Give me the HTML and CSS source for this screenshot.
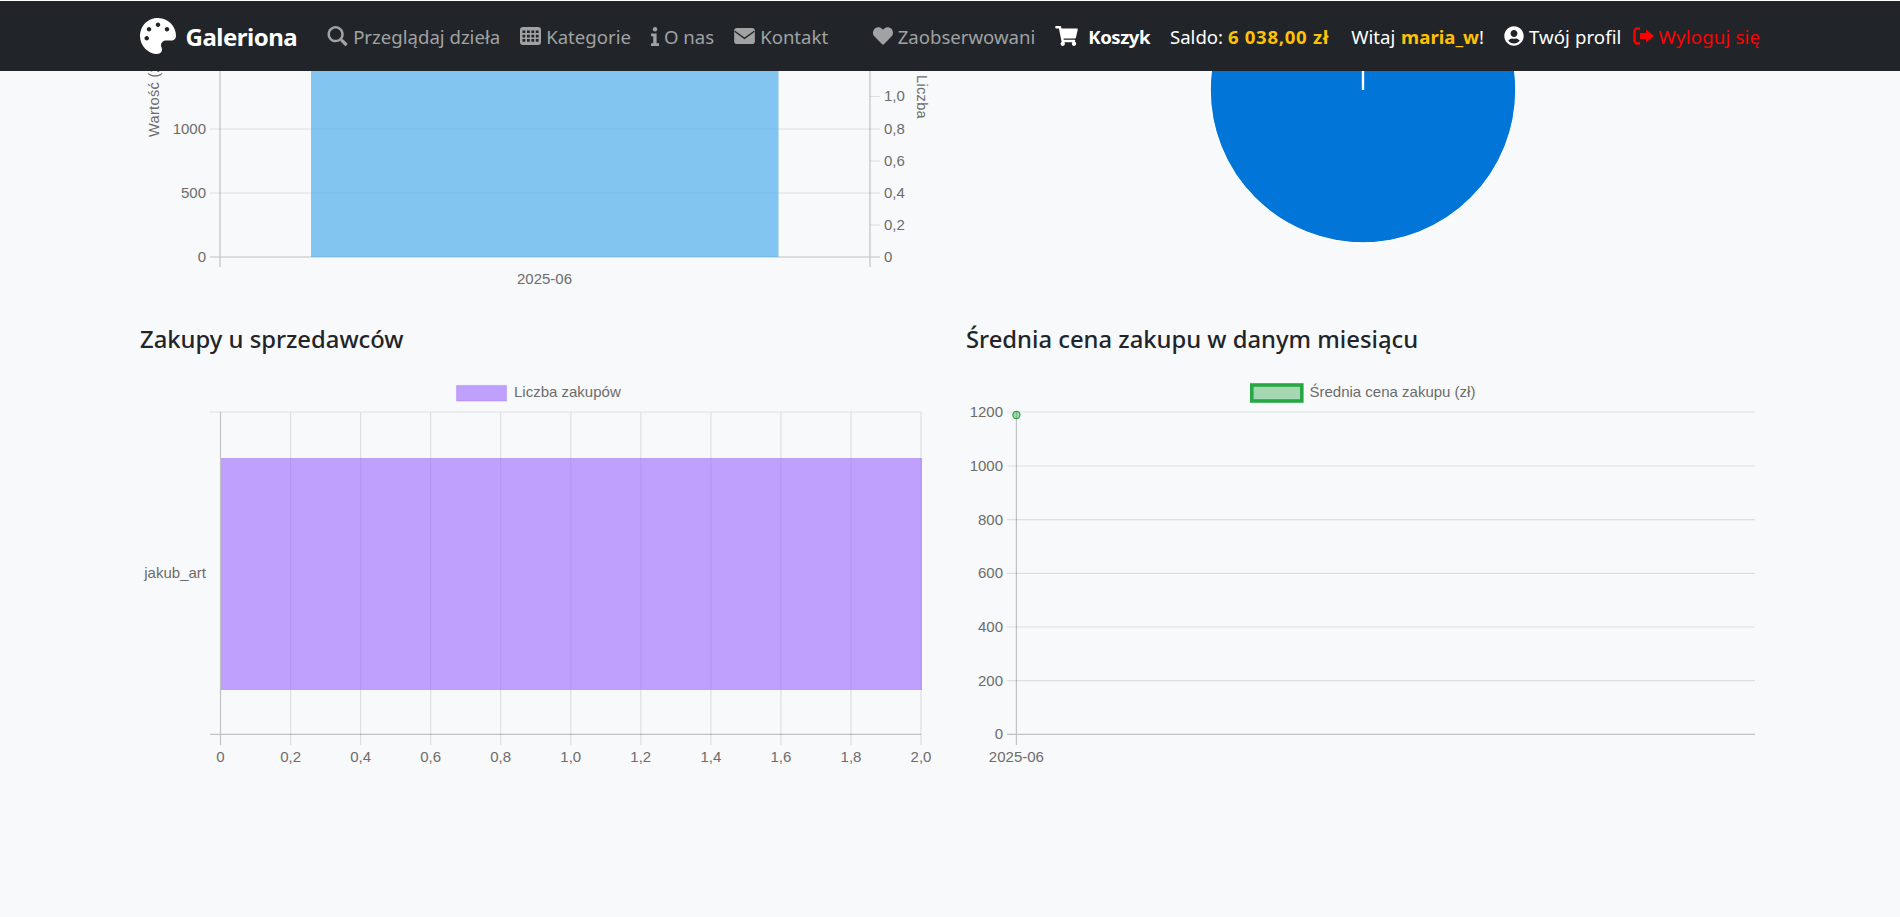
FILE: index.html
```html
<!DOCTYPE html>
<html lang="pl">
<head>
    <meta charset="UTF-8">
    <meta name="viewport" content="width=device-width, initial-scale=1.0">
    <title>Galeriona - Statystyki</title>
    <link rel="stylesheet" href="styles.css">
</head>
<body>

    <nav class="navbar">
        <a class="brand" href="#">
            <svg class="logo" viewBox="0 0 512 512"><path d="M204.3 5C104.9 24.4 24.8 104.3 5.2 203.4c-37 187 131.7 326.4 258.8 306.7 41.2-6.4 61.4-54.6 42.5-91.7-23.1-45.4 9.9-98.4 60.9-98.4h79.7c35.8 0 64.8-29.6 64.9-65.3C511.5 97.1 368.1-26.9 204.3 5zM96 320c-17.7 0-32-14.3-32-32s14.3-32 32-32 32 14.3 32 32-14.3 32-32 32zm32-128c-17.7 0-32-14.3-32-32s14.3-32 32-32 32 14.3 32 32-14.3 32-32 32zm128-64c-17.7 0-32-14.3-32-32s14.3-32 32-32 32 14.3 32 32-14.3 32-32 32zm128 64c-17.7 0-32-14.3-32-32s14.3-32 32-32 32 14.3 32 32-14.3 32-32 32z"/></svg>
            <span>Galeriona</span>
        </a>

        <div class="nav-group nav-main">
            <a class="nav-link" href="#">
                <svg class="icon icon-search" viewBox="0 0 512 512"><path d="M505 442.7L405.3 343c-4.5-4.5-10.6-7-17-7H372c27.6-35.3 44-79.7 44-128C416 93.1 322.9 0 208 0S0 93.1 0 208s93.1 208 208 208c48.3 0 92.7-16.4 128-44v16.3c0 6.4 2.5 12.5 7 17l99.7 99.7c9.4 9.4 24.6 9.4 33.9 0l28.3-28.3c9.4-9.4 9.4-24.6.1-34zM208 352c-79.5 0-144-64.4-144-144 0-79.500 64.400-144 144-144 79.500 0 144 64.500 144 144 0 79.600-64.500 144-144 144z"/></svg>
                Przeglądaj dzieła
            </a>
            <a class="nav-link" href="#">
                <svg class="icon icon-table" viewBox="0 0 21 18"><path fill-rule="evenodd" d="M3 0h15a3 3 0 0 1 3 3v12a3 3 0 0 1-3 3H3a3 3 0 0 1-3-3V3a3 3 0 0 1 3-3zM2.500 3.500v2.600h2.800V3.500zm4.500 0v2.600h2.800V3.500zm4.400 0v2.600h2.800V3.500zm4.400 0v2.600h2.800V3.500zM2.500 7.800v2.600h2.800V7.800zm4.500 0v2.600h2.800V7.800zm4.400 0v2.600h2.800V7.800zm4.400 0v2.600h2.800V7.800zM2.500 12.100v2.600h2.800v-2.600zm4.500 0v2.600h2.800v-2.600zm4.400 0v2.600h2.800v-2.600zm4.400 0v2.600h2.800v-2.600z"/></svg>
                Kategorie
            </a>
            <a class="nav-link" href="#">
                <svg class="icon icon-info" viewBox="0 0 8 19"><circle cx="4" cy="2.200" r="2.200"/><path d="M0 6.500h5.600v9.800H8V19H0v-2.700h2.200V9.200H0z"/></svg>
                O nas
            </a>
            <a class="nav-link" href="#">
                <svg class="icon icon-mail" viewBox="0 0 22 17"><rect width="22" height="17" rx="3"/><path class="mail-fold" d="M0.500 3.500L11 11l10.500-7.500"/></svg>
                Kontakt
            </a>
        </div>

        <div class="nav-group nav-user">
            <a class="nav-link nav-watched" href="#">
                <svg class="icon icon-heart" viewBox="0 0 512 512"><path d="M462.3 62.6C407.500 15.900 326 24.300 275.700 76.200L256 96.500l-19.700-20.300C186.100 24.300 104.500 15.900 49.700 62.600c-62.800 53.600-66.100 149.800-9.900 207.900l193.500 199.800c12.500 12.900 32.800 12.900 45.300 0l193.500-199.800c56.300-58.100 53-154.300-9.800-207.900z"/></svg>
                Zaobserwowani
            </a>
            <a class="nav-link nav-cart" href="#">
                <svg class="icon icon-cart" viewBox="0 0 576 512"><path d="M528.120 301.319l47.273-208C578.806 78.301 567.391 64 551.990 64H159.208l-9.166-44.810C147.758 8.021 137.930 0 126.529 0H24C10.745 0 0 10.745 0 24v16c0 13.255 10.745 24 24 24h69.883l70.248 343.435C147.325 417.100 136 435.222 136 456c0 30.928 25.072 56 56 56s56-25.072 56-56c0-15.674-6.447-29.835-16.824-40h209.647C430.447 426.165 424 440.326 424 456c0 30.928 25.072 56 56 56s56-25.072 56-56c0-22.172-12.888-41.332-31.579-50.405l5.517-24.276c3.413-15.018-8.002-29.319-23.403-29.319H218.117l-6.545-32h293.145c11.206 0 20.920-7.754 23.403-18.681z"/></svg>
                <strong class="cart-label">Koszyk</strong>
            </a>
            <span class="nav-text">Saldo: <strong class="accent balance">6 038,00 zł</strong></span>
            <span class="nav-text greeting">Witaj <strong class="accent">maria_w</strong>!</span>
            <a class="nav-link nav-profile" href="#">
                <svg class="icon icon-profile" viewBox="0 0 496 512"><path d="M248 8C111 8 0 119 0 256s111 248 248 248 248-111 248-248S385 8 248 8zm0 96c48.600 0 88 39.400 88 88s-39.400 88-88 88-88-39.400-88-88 39.400-88 88-88zm0 344c-58.700 0-111.300-26.600-146.500-68.200 18.800-35.400 55.600-59.800 98.500-59.800 2.400 0 4.800.4 7.100 1.100 13 4.200 26.600 6.900 40.900 6.900 14.300 0 28-2.700 40.900-6.900 2.300-.7 4.700-1.100 7.100-1.100 42.900 0 79.700 24.400 98.500 59.800C359.300 421.400 306.700 448 248 448z"/></svg>
                Twój profil
            </a>
            <a class="nav-link nav-logout" href="#">
                <svg class="icon icon-logout" viewBox="0 0 21 18"><path class="logout-door" d="M7 1.500H4.500a3 3 0 0 0-3 3v9a3 3 0 0 0 3 3H7"/><path d="M7 6h6V2.500L21 9l-8 6.500V12H7z"/></svg>
                Wyloguj się
            </a>
        </div>
    </nav>

    <main class="content">
        <section class="chart-row">
            <!-- value / count per month, scrolled under the navbar -->
            <svg class="chart chart-top" viewBox="140 71 826 229">
                <path class="grid" d="M210 65H880M210 129H880M210 193H880M870 96.500H880M870 161H880M870 225H880"/>
                <path class="axis" d="M220 60V267M870 60V267M210 257H880"/>
                <rect class="bar-blue" x="311" y="60" width="467.500" height="197"/>
                <text class="tick" x="206" y="134" text-anchor="end">1000</text>
                <text class="tick" x="206" y="198" text-anchor="end">500</text>
                <text class="tick" x="206" y="262" text-anchor="end">0</text>
                <text class="tick" x="884" y="69">1,2</text>
                <text class="tick" x="884" y="101">1,0</text>
                <text class="tick" x="884" y="134">0,8</text>
                <text class="tick" x="884" y="166">0,6</text>
                <text class="tick" x="884" y="198">0,4</text>
                <text class="tick" x="884" y="230">0,2</text>
                <text class="tick" x="884" y="262">0</text>
                <text class="tick" x="544.500" y="284" text-anchor="middle">2025-06</text>
                <text class="tick tick-side" transform="translate(159,137) rotate(-90)">Wartość (zł)</text>
                <text class="tick tick-side" transform="translate(917,75) rotate(90)">Liczba</text>
            </svg>
            <svg class="chart chart-top" viewBox="966 71 794 229">
                <circle class="pie" cx="1363" cy="90" r="152.800"/>
                <path class="pie-gap" d="M1363 60V90"/>
            </svg>
        </section>

        <section class="chart-row">
            <div class="chart-box">
                <h5>Zakupy u sprzedawców</h5>
                <svg class="chart chart-bottom" viewBox="140 370 826 430">
                    <rect class="legend-purple" x="456.500" y="385.500" width="50" height="15.500"/>
                    <text class="tick" x="514" y="397">Liczba zakupów</text>
                    <path class="grid" d="M290.600 412V745M360.600 412V745M430.700 412V745M500.700 412V745M570.800 412V745M640.800 412V745M710.900 412V745M780.900 412V745M851 412V745M921 412V745M210 412H921"/>
                    <path class="axis" d="M220.500 412V745M210 734.300H921"/>
                    <rect class="bar-purple" x="221" y="458" width="701" height="232"/>
                    <text class="tick" x="206" y="578" text-anchor="end">jakub_art</text>
                    <text class="tick" x="220.500" y="762" text-anchor="middle">0</text>
                    <text class="tick" x="290.600" y="762" text-anchor="middle">0,2</text>
                    <text class="tick" x="360.600" y="762" text-anchor="middle">0,4</text>
                    <text class="tick" x="430.700" y="762" text-anchor="middle">0,6</text>
                    <text class="tick" x="500.700" y="762" text-anchor="middle">0,8</text>
                    <text class="tick" x="570.800" y="762" text-anchor="middle">1,0</text>
                    <text class="tick" x="640.800" y="762" text-anchor="middle">1,2</text>
                    <text class="tick" x="710.900" y="762" text-anchor="middle">1,4</text>
                    <text class="tick" x="780.900" y="762" text-anchor="middle">1,6</text>
                    <text class="tick" x="851" y="762" text-anchor="middle">1,8</text>
                    <text class="tick" x="921" y="762" text-anchor="middle">2,0</text>
                </svg>
            </div>
            <div class="chart-box">
                <h5>Średnia cena zakupu w danym miesiącu</h5>
                <svg class="chart chart-bottom" viewBox="966 370 794 430">
                    <rect class="legend-green" x="1251.800" y="385" width="50" height="16"/>
                    <text class="tick" x="1309.500" y="397">Średnia cena zakupu (zł)</text>
                    <path class="grid" d="M1007 412H1755M1007 466H1755M1007 519.600H1755M1007 573.300H1755M1007 627H1755M1007 680.700H1755"/>
                    <path class="axis" d="M1016.400 412V745M1007 734.300H1755"/>
                    <circle class="point" cx="1016.400" cy="415" r="3.600"/>
                    <text class="tick" x="1003" y="417" text-anchor="end">1200</text>
                    <text class="tick" x="1003" y="471" text-anchor="end">1000</text>
                    <text class="tick" x="1003" y="525" text-anchor="end">800</text>
                    <text class="tick" x="1003" y="578" text-anchor="end">600</text>
                    <text class="tick" x="1003" y="632" text-anchor="end">400</text>
                    <text class="tick" x="1003" y="686" text-anchor="end">200</text>
                    <text class="tick" x="1003" y="739" text-anchor="end">0</text>
                    <text class="tick" x="1016.400" y="762" text-anchor="middle">2025-06</text>
                </svg>
            </div>
        </section>
    </main>

</body>
</html>
```

FILE: styles.css
```css
body {
    margin: 0;
    height: 917px;
    overflow: hidden;
    background-color: #f8f9fa;
    color: #212529;
    font-family: "Noto Sans", sans-serif;
}
a {
    text-decoration: none;
    color: inherit;
}

/* navbar */
.navbar {
    display: flex;
    align-items: center;
    height: 70px;
    padding-left: 140px;
    background-color: #212529;
    border-top: 1px solid #fff;
    font-size: 18.6px;
    color: #fff;
    white-space: nowrap;
}
.brand {
    display: flex;
    align-items: center;
    gap: 9.5px;
    font-size: 24px;
    font-weight: 700;
    letter-spacing: -0.5px;
}
.logo {
    width: 36px;
    height: 36px;
    fill: #fff;
}
.nav-group {
    display: flex;
    align-items: center;
    gap: 20px;
}
.nav-main {
    margin-left: 30px;
}
.nav-user {
    margin-left: 44px;
}
.nav-link {
    display: flex;
    align-items: center;
    gap: 5px;
    color: #a0a2a4;
}
.nav-watched {
    gap: 3.5px;
}
.icon {
    height: 20px;
    fill: currentColor;
    flex: none;
}
.icon-search { width: 21px; }
.icon-table { width: 21px; height: 18px; }
.icon-info { width: 8px; height: 19px; }
.icon-mail { width: 21px; height: 16px; }
.icon-heart { width: 22px; }
.icon-cart { width: 23px; }
.icon-profile { width: 20px; }
.icon-logout { width: 21px; height: 18px; }
.mail-fold {
    fill: none;
    stroke: #212529;
    stroke-width: 1.4;
}
.logout-door {
    fill: none;
    stroke: currentColor;
    stroke-width: 2.4;
}
.nav-cart {
    color: #fff;
    gap: 10px;
}
.cart-label {
    letter-spacing: -0.5px;
}
.greeting {
    margin-left: 2px;
    word-spacing: 1px;
}
.nav-profile {
    color: #fff;
    letter-spacing: 0.1px;
}
.nav-logout {
    color: #f00;
    margin-left: -9px;
    letter-spacing: 0.2px;
}
.accent {
    color: #ffc107;
}
.balance {
    letter-spacing: 0.7px;
}

/* charts */
.chart-row {
    display: grid;
    grid-template-columns: 826px 794px;
    padding-left: 140px;
}
.chart {
    display: block;
    width: 100%;
}
.chart-top {
    height: 229px;
}
.chart-bottom {
    height: 430px;
}
.chart-box h5 {
    margin: 0;
    padding: 24px 0 16px;
    font-size: 23.8px;
    line-height: 30px;
    font-weight: 500;
}
.tick {
    font-family: "Liberation Sans", Arial, sans-serif;
    font-size: 15px;
    fill: #6c6c6c;
}
.tick-side {
    font-size: 14.6px;
    letter-spacing: 0.3px;
}
.grid {
    fill: none;
    stroke: rgba(0, 0, 0, 0.1);
    stroke-width: 1.2;
}
.axis {
    fill: none;
    stroke: rgba(0, 0, 0, 0.22);
    stroke-width: 1.2;
}
.bar-blue {
    fill: rgba(54, 162, 235, 0.6);
}
.bar-purple {
    fill: rgba(153, 102, 255, 0.6);
}
.pie {
    fill: #0275d8;
    stroke: #fff;
    stroke-width: 1.2;
}
.pie-gap {
    stroke: #fff;
    stroke-width: 2.4;
}
.legend-purple {
    fill: rgba(153, 102, 255, 0.6);
    stroke: rgba(153, 102, 255, 0.3);
    stroke-width: 1.2;
}
.legend-green {
    fill: rgba(40, 167, 69, 0.4);
    stroke: #28a745;
    stroke-width: 3.6;
}
.point {
    fill: rgba(40, 167, 69, 0.4);
    stroke: #28a745;
    stroke-width: 1.2;
}
```
